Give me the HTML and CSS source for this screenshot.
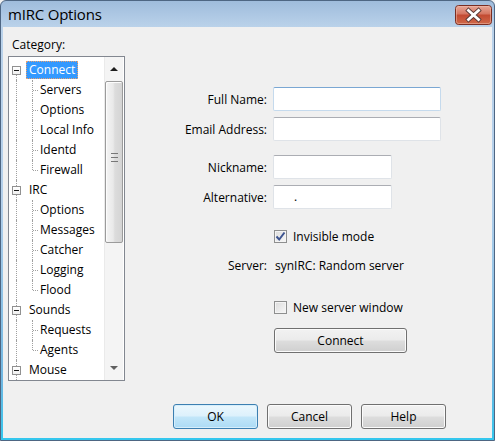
FILE: index.html
```html
<!DOCTYPE html>
<html>
<head>
<meta charset="utf-8">
<title>mIRC Options</title>
<link rel="stylesheet" href="styles.css">
</head>
<body>
<div class="window">
  <div class="titlebar">
    <span class="title">mIRC Options</span>
    <button class="close" aria-label="Close">
      <svg width="37" height="20" viewBox="0 0 37 20">
        <defs>
          <linearGradient id="cg" x1="0" y1="0" x2="0" y2="1">
            <stop offset="0" stop-color="#e9a99a"/>
            <stop offset="0.45" stop-color="#d47560"/>
            <stop offset="0.5" stop-color="#c24a32"/>
            <stop offset="1" stop-color="#d06a4a"/>
          </linearGradient>
        </defs>
        <rect x="0.5" y="0.5" width="36" height="19" rx="3" fill="url(#cg)" stroke="#7a2d22"/>
        <rect x="1.5" y="1.5" width="34" height="17" rx="2" fill="none" stroke="#f0c0b0" stroke-opacity="0.5"/>
        <path d="M13.5 5.5 L23.5 14.5 M23.5 5.5 L13.5 14.5" stroke="#5a3a36" stroke-width="4.6" stroke-linecap="square"/>
        <path d="M13.5 5.5 L23.5 14.5 M23.5 5.5 L13.5 14.5" stroke="#ffffff" stroke-width="2.8" stroke-linecap="square"/>
      </svg>
    </button>
  </div>
  <div class="client">
    <div class="category">Category:</div>
    <div class="main">
      <div class="tree">
        <div class="items">
          <div class="row top first"><span class="guide"><span class="exp"></span></span><span class="label sel">Connect</span></div>
          <div class="row child"><span class="guide"></span><span class="guide2"></span><span class="label">Servers</span></div>
          <div class="row child"><span class="guide"></span><span class="guide2"></span><span class="label">Options</span></div>
          <div class="row child"><span class="guide"></span><span class="guide2"></span><span class="label">Local Info</span></div>
          <div class="row child"><span class="guide"></span><span class="guide2"></span><span class="label">Identd</span></div>
          <div class="row child last"><span class="guide"></span><span class="guide2"></span><span class="label">Firewall</span></div>
          <div class="row top"><span class="guide"><span class="exp"></span></span><span class="label">IRC</span></div>
          <div class="row child"><span class="guide"></span><span class="guide2"></span><span class="label">Options</span></div>
          <div class="row child"><span class="guide"></span><span class="guide2"></span><span class="label">Messages</span></div>
          <div class="row child"><span class="guide"></span><span class="guide2"></span><span class="label">Catcher</span></div>
          <div class="row child"><span class="guide"></span><span class="guide2"></span><span class="label">Logging</span></div>
          <div class="row child last"><span class="guide"></span><span class="guide2"></span><span class="label">Flood</span></div>
          <div class="row top"><span class="guide"><span class="exp"></span></span><span class="label">Sounds</span></div>
          <div class="row child"><span class="guide"></span><span class="guide2"></span><span class="label">Requests</span></div>
          <div class="row child last"><span class="guide"></span><span class="guide2"></span><span class="label">Agents</span></div>
          <div class="row top"><span class="guide"><span class="exp"></span></span><span class="label">Mouse</span></div>
          <div class="row child"><span class="guide"></span></div>
        </div>
        <div class="scrollbar">
          <div class="sb-btn"><span class="arrow up"></span></div>
          <div class="thumb"><span class="grip"></span></div>
          <div class="track"></div>
          <div class="sb-btn"><span class="arrow down"></span></div>
        </div>
      </div>
      <div class="form">
        <div class="frow r-full"><label class="flabel">Full Name:</label><div class="input focus wide"></div></div>
        <div class="frow r-email"><label class="flabel">Email Address:</label><div class="input wide"></div></div>
        <div class="frow r-nick"><label class="flabel">Nickname:</label><div class="input narrow"></div></div>
        <div class="frow r-alt"><label class="flabel">Alternative:</label><div class="input narrow"><span class="dot">.</span></div></div>
        <div class="frow r-inv"><span class="flabel"></span><div class="check"><span class="box checked"><svg width="11" height="11" viewBox="0 0 11 11"><path d="M1.5 5.5 L4.2 8.5 L9.5 1.5" fill="none" stroke="#3d5490" stroke-width="2"/></svg></span><span>Invisible mode</span></div></div>
        <div class="frow r-server"><span class="flabel">Server:</span><span class="value">synIRC: Random server</span></div>
        <div class="frow r-new"><span class="flabel"></span><div class="check"><span class="box"></span><span>New server window</span></div></div>
        <div class="frow r-connect"><span class="flabel"></span><button class="btn connect">Connect</button></div>
      </div>
    </div>
    <div class="buttons">
      <button class="btn default">OK</button>
      <button class="btn">Cancel</button>
      <button class="btn">Help</button>
    </div>
  </div>
</div>
</body>
</html>
```
FILE: styles.css
```css
html, body {
  margin: 0;
  padding: 0;
  background: #f0f0f0;
}
body {
  font-family: "Open Sans", "Noto Sans", sans-serif;
  font-size: 12px;
  color: #000;
}
.window {
  width: 495px;
  height: 441px;
  box-sizing: border-box;
  display: flex;
  flex-direction: column;
  border: 1px solid #4e6683;
  border-radius: 6px 6px 0 0;
  padding: 0 2px 2px 2px;
  background: linear-gradient(#9fbcdc, #bad2ea 26px, #b3cfea 200px, #6fb7e2 380px, #33c7ee);
  overflow: hidden;
}
.titlebar {
  height: 26px;
  flex: none;
  display: flex;
  align-items: center;
  justify-content: space-between;
  padding-left: 5px;
}
.title {
  font-size: 15px;
  letter-spacing: -0.2px;
  color: #000;
}
.close {
  width: 37px;
  height: 20px;
  padding: 0;
  margin: 1px 0 0 0;
  border: 0;
  background: none;
  display: block;
}
.close svg {
  display: block;
}
.client {
  flex: 1;
  background: #f0f0f0;
  display: flex;
  flex-direction: column;
  padding: 10px 0 9px 5px;
  box-sizing: border-box;
}
.category {
  height: 16px;
  line-height: 16px;
  margin-left: 4px;
}
.main {
  display: flex;
  margin-top: 3px;
  height: 325px;
}
.tree {
  width: 117px;
  height: 325px;
  box-sizing: border-box;
  border: 1px solid #828790;
  background: #fff;
  display: flex;
  flex: none;
}
.items {
  flex: 1;
  overflow: hidden;
  padding-top: 3px;
}
.row {
  display: flex;
  align-items: center;
  height: 20px;
}
.guide {
  width: 16px;
  height: 20px;
  flex: none;
  position: relative;
  display: flex;
  align-items: center;
}
.guide::before {
  content: "";
  position: absolute;
  left: 7px;
  top: 0;
  bottom: 0;
  border-left: 1px dotted #a0a0a0;
}
.first .guide::before {
  top: 10px;
}
.exp {
  width: 9px;
  height: 9px;
  box-sizing: border-box;
  margin-left: 3px;
  border: 1px solid #919191;
  background: linear-gradient(#fff, #f0f0f0);
  position: relative;
  z-index: 1;
}
.exp::after {
  content: "";
  position: absolute;
  left: 1px;
  width: 5px;
  top: 3px;
  height: 1px;
  background: #1a1a1a;
}
.guide2 {
  width: 12px;
  height: 20px;
  flex: none;
  position: relative;
}
.guide2::before {
  content: "";
  position: absolute;
  left: 7px;
  top: 0;
  bottom: 0;
  border-left: 1px dotted #a0a0a0;
}
.last .guide2::before {
  bottom: 10px;
}
.guide2::after {
  content: "";
  position: absolute;
  left: 8px;
  top: 10px;
  width: 5px;
  border-top: 1px dotted #a0a0a0;
}
.label {
  margin-left: 1px;
  padding: 0 3px 0 3px;
  height: 18px;
  line-height: 18px;
  white-space: nowrap;
  box-sizing: border-box;
}
.child .label {
  padding-left: 2px;
}
.label.sel {
  background: #3399ff;
  color: #fff;
  outline: 1px dotted #e8a070;
  outline-offset: -1px;
}
.scrollbar {
  width: 18px;
  flex: none;
  display: flex;
  flex-direction: column;
  background: #f4f4f4;
  border-left: 1px solid #eaeaea;
  margin-right: 1px;
}
.sb-btn {
  height: 24px;
  flex: none;
  display: flex;
  align-items: center;
  justify-content: center;
}
.arrow {
  width: 0;
  height: 0;
  border-left: 4px solid transparent;
  border-right: 4px solid transparent;
}
.arrow.up {
  border-bottom: 4px solid #1e1e1e;
}
.arrow.down {
  border-top: 4px solid #606060;
}
.thumb {
  height: 162px;
  flex: none;
  box-sizing: border-box;
  border: 1px solid #9b9b9b;
  border-radius: 2px;
  background: linear-gradient(90deg, #f4f4f4, #e9e9e9 45%, #dcdcdc 55%, #d4d4d4);
  box-shadow: inset 1px 1px 0 #fcfcfc;
  display: flex;
  align-items: center;
  justify-content: center;
}
.grip {
  width: 7px;
  height: 7px;
  border-top: 1px solid #777;
  border-bottom: 1px solid #777;
  background: linear-gradient(#777, #777) center / 7px 1px no-repeat;
  margin-top: -10px;
}
.track {
  flex: 1;
}
.form {
  flex: 1;
  padding-top: 31px;
}
.frow {
  display: flex;
  align-items: center;
}
.flabel {
  width: 142px;
  flex: none;
  text-align: right;
  margin-right: 6px;
  white-space: nowrap;
}
.input {
  height: 24px;
  box-sizing: border-box;
  background: #fff;
  border: 1px solid #dfe3e8;
  border-top-color: #abadb3;
  border-radius: 2px;
  position: relative;
}
.input.focus {
  border-color: #c5daed;
  border-top-color: #7aa7d3;
}
.wide {
  width: 168px;
}
.narrow {
  width: 119px;
}
.dot {
  position: absolute;
  left: 20px;
  top: 3px;
  line-height: 16px;
}
.r-email { margin-top: 6px; }
.r-nick { margin-top: 14px; }
.r-alt { margin-top: 6px; }
.r-inv { margin-top: 18px; height: 18px; }
.r-server { margin-top: 11px; height: 18px; }
.value { padding-left: 2px; }
.r-new { margin-top: 24px; height: 18px; }
.r-connect { margin-top: 12px; }
.check {
  display: flex;
  align-items: center;
  gap: 6px;
}
.box {
  width: 13px;
  height: 13px;
  box-sizing: border-box;
  border: 1px solid #8e8f8f;
  background: linear-gradient(135deg, #dcdcdc, #f7f7f7);
  box-shadow: inset 0 0 0 1px #f4f4f4;
  display: flex;
  align-items: center;
  justify-content: center;
  margin-left: 1px;
}
.box svg {
  display: block;
}
.btn {
  width: 85px;
  height: 25px;
  box-sizing: border-box;
  border: 1px solid #707070;
  border-radius: 3px;
  background: linear-gradient(#f2f2f2, #ebebeb 48%, #dddddd 52%, #cfcfcf);
  box-shadow: inset 0 0 0 1px #fbfbfb;
  font-family: "Open Sans", "Noto Sans", sans-serif;
  font-size: 12px;
  color: #000;
  padding: 0;
}
.btn.connect {
  width: 133px;
  margin-left: 1px;
}
.btn.default {
  border-color: #3c7fb1;
  background: linear-gradient(#ecf7fd, #dcf1fc 48%, #c2e6f9 52%, #acdbf5);
  box-shadow: inset 0 0 0 1px #d6eefb;
}
.buttons {
  display: flex;
  justify-content: flex-end;
  gap: 9px;
  padding-right: 46px;
  margin-top: 23px;
}
```
